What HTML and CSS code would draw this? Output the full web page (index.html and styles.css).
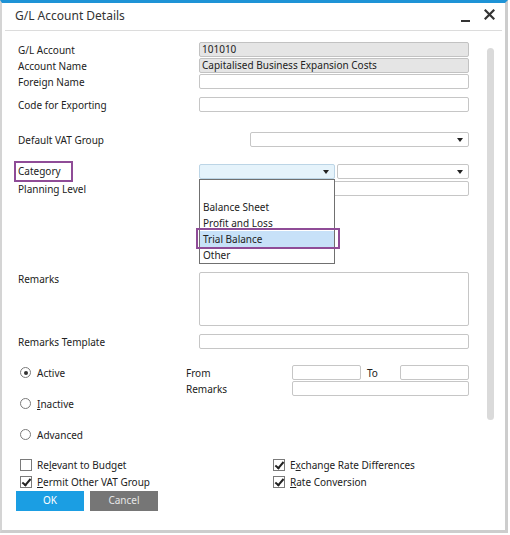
FILE: index.html
```html
<!DOCTYPE html>
<html>
<head>
<meta charset="utf-8">
<link rel="stylesheet" href="styles.css">
</head>
<body>
<div class="window">
  <div class="titlebar">
    <span class="title">G/L Account Details</span>
    <div class="controls">
      <span class="minimize"></span>
      <svg class="close" width="11" height="11" viewBox="0 0 11 11"><path d="M1.5 1.5 L9.5 9.5 M9.5 1.5 L1.5 9.5" stroke="#333" stroke-width="2.2" stroke-linecap="square"/></svg>
    </div>
  </div>
  <div class="body">
    <div class="form">
      <div class="row r-gl"><span class="label">G/L Account</span><div class="field grey">101010</div></div>
      <div class="row r-tight"><span class="label">Account Name</span><div class="field grey">Capitalised Business Expansion Costs</div></div>
      <div class="row r-tight"><span class="label">Foreign Name</span><div class="field"></div></div>
      <div class="row r-code"><span class="label">Code for Exporting</span><div class="field"></div></div>
      <div class="row r-vat"><span class="label">Default VAT Group</span><div class="field select vat"><span class="arrow"></span></div></div>
      <div class="row r-cat">
        <span class="label boxed">Category</span>
        <div class="combo">
          <div class="field select cat active"><span class="arrow"></span></div>
          <div class="list">
            <div class="item blank"></div>
            <div class="item">Balance Sheet</div>
            <div class="item">Profit and Loss</div>
            <div class="item selected">Trial Balance</div>
            <div class="item">Other</div>
          </div>
        </div>
        <div class="field select cat2"><span class="arrow"></span></div>
      </div>
      <div class="row r-plan"><span class="label">Planning Level</span><div class="field"></div></div>
      <div class="row r-remarks"><span class="label">Remarks</span><div class="field area"></div></div>
      <div class="row r-tmpl"><span class="label">Remarks Template</span><div class="field"></div></div>

      <div class="row r-active">
        <div class="radio-col"><span class="radio on"></span><span>Active</span></div>
        <span class="sublabel">From</span>
        <div class="field short"></div>
        <span class="to">To</span>
        <div class="field short"></div>
      </div>
      <div class="row r-sub">
        <div class="radio-col"></div>
        <span class="sublabel">Remarks</span>
        <div class="field mid"></div>
      </div>
      <div class="row r-inactive"><div class="radio-col"><span class="radio"></span><span><u>I</u>nactive</span></div></div>
      <div class="row r-adv"><div class="radio-col"><span class="radio"></span><span>Advanced</span></div></div>

      <div class="checks">
        <div class="check"><span class="box"></span><span>Re<u>l</u>evant to Budget</span></div>
        <div class="check"><span class="box on"></span><span>E<u>x</u>change Rate Differences</span></div>
        <div class="check"><span class="box on"></span><span><u>P</u>ermit Other VAT Group</span></div>
        <div class="check"><span class="box on"></span><span><u>R</u>ate Conversion</span></div>
      </div>

      <div class="buttons">
        <div class="btn ok">OK</div>
        <div class="btn cancel">Cancel</div>
      </div>
    </div>
    <div class="scrollbar"><div class="thumb"></div></div>
  </div>
</div>
</body>
</html>
```
FILE: styles.css
```css
* { box-sizing: border-box; }
html, body { margin: 0; padding: 0; background: #ffffff; }
body {
  font-family: "Noto Sans", "DejaVu Sans", sans-serif;
  font-size: 10px;
  color: #222;
}
.window {
  width: 508px;
  height: 533px;
  border-top: 3px solid #1e93d6;
  border-left: 2px solid #d4d4d4;
  border-right: 3px solid #cdcdcd;
  border-bottom: 3px solid #cdcdcd;
  background: #fff;
}
.titlebar {
  height: 28px;
  margin: 0 3px;
  border-bottom: 1px solid #dcdcdc;
  display: flex;
  align-items: center;
  justify-content: space-between;
  padding-left: 10px;
}
.title { font-size: 12px; color: #333; margin-top: -2px; }
.controls { display: flex; align-items: center; gap: 14px; padding-right: 7px; }
.minimize { width: 9px; height: 2px; background: #333; margin-top: 8px; }
.close { margin-top: -4px; }

.body { display: flex; }
.form { width: 483px; padding-left: 16px; }
.scrollbar { width: 7px; margin-left: 2px; padding-top: 17px; }
.thumb { width: 7px; height: 372px; background: #dadada; border-radius: 4px; }

.row { display: flex; align-items: center; height: 15px; }
.label { width: 181px; flex: none; white-space: nowrap; }
.field {
  width: 270px;
  height: 15px;
  border: 1px solid #c6c6c6;
  border-radius: 2px;
  background: #fff;
  padding: 0 2px;
  line-height: 13px;
  white-space: nowrap;
  position: relative;
}
.field.grey { background: #e5e5e5; border-color: #c2c2c2; }
.r-gl { margin-top: 11px; }
.r-tight { margin-top: 1px; }
.r-code { margin-top: 8px; }
.r-vat { margin-top: 20px; }
.r-vat .label { width: 232px; }
.field.vat { width: 219px; }
.arrow {
  position: absolute;
  right: 5px;
  top: 5px;
  width: 0; height: 0;
  border-left: 3.5px solid transparent;
  border-right: 3.5px solid transparent;
  border-top: 4px solid #222;
}
.r-cat { margin-top: 17px; position: relative; z-index: 2; }
.label.boxed {
  width: 59px;
  height: 21px;
  margin-left: -4px;
  margin-right: 126px;
  border: 2px solid #8f4c97;
  padding-left: 2px;
  line-height: 16px;
}
.combo { position: relative; width: 136px; }
.field.cat { width: 136px; }
.field.cat.active { background: #e5f3fb; border-color: #bcd5e6; }
.field.cat2 { width: 132px; margin-left: 2px; }
.list {
  position: absolute;
  top: 15px;
  left: 0;
  width: 136px;
  border: 1px solid #707070;
  background: #fff;
}
.item { height: 16px; line-height: 16px; padding-left: 3px; position: relative; }
.item.blank { height: 19px; }
.item.selected { background: #c7e1f8; }
.item.selected::after {
  content: "";
  position: absolute;
  top: -3px; bottom: -2px; left: -4px; right: -6px;
  border: 2px solid #8f4c97;
}
.r-plan { margin-top: 2px; }
.r-remarks { margin-top: 76px; height: 54px; align-items: flex-start; }
.r-remarks .label { line-height: 14px; }
.field.area { height: 54px; }
.r-tmpl { margin-top: 8px; }

.radio-col { width: 168px; flex: none; display: flex; align-items: center; padding-left: 2px; white-space: nowrap; }
.radio {
  width: 11px; height: 11px;
  border: 1px solid #7a7a7a;
  border-radius: 50%;
  margin-right: 6px;
  position: relative;
  flex: none;
}
.radio.on::after {
  content: "";
  position: absolute;
  left: 2.5px; top: 2.5px;
  width: 4px; height: 4px;
  border-radius: 50%;
  background: #333;
}
.sublabel { width: 106px; flex: none; }
.field.short { width: 69px; }
.field.mid { width: 177px; }
.to { width: 39px; padding-left: 6px; flex: none; }
.r-active { margin-top: 16px; }
.r-sub { margin-top: 1px; }
.r-adv { margin-top: 16px; }

.checks {
  margin-top: 15px;
  display: grid;
  grid-template-columns: 253px auto;
  row-gap: 2px;
  padding-left: 2px;
}
.check { display: flex; align-items: center; height: 15px; white-space: nowrap; }
.box {
  width: 12px; height: 12px;
  border: 1px solid #7a7a7a;
  margin-right: 5px;
  position: relative;
  flex: none;
}
.box.on::after {
  content: "";
  position: absolute;
  left: 3px; top: 0px;
  width: 3px; height: 7px;
  border-right: 2px solid #222;
  border-bottom: 2px solid #222;
  transform: rotate(40deg);
}
.buttons { display: flex; gap: 6px; margin-top: 2px; margin-left: -2px; }
.btn {
  width: 68px; height: 20px;
  color: #fff;
  text-align: center;
  line-height: 19px;
  font-size: 10px;
}
.btn.ok { background: #1b9ee3; }
.btn.cancel { background: #767676; color: #e6e6e6; }
```
